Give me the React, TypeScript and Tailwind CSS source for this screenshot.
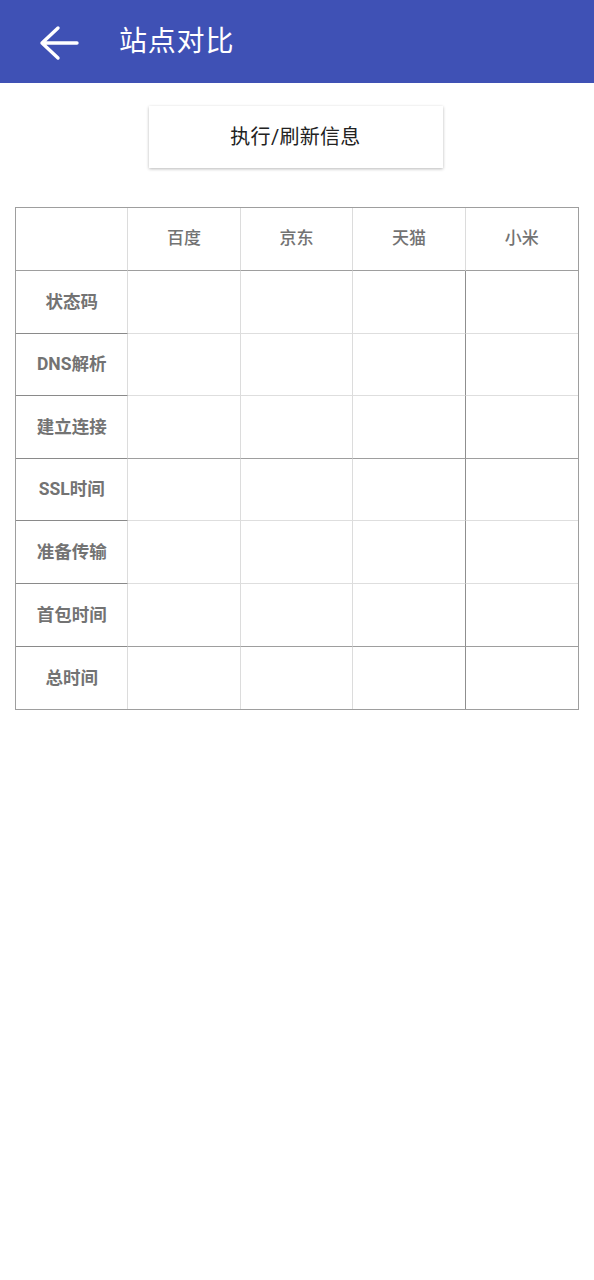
import React from "react";

const FONT = { fontFamily: "Roboto, 'Noto Sans CJK SC', 'Noto Sans', sans-serif" };

const cols = ["百度", "京东", "天猫", "小米"];
const rows = ["状态码", "DNS解析", "建立连接", "SSL时间", "准备传输", "首包时间", "总时间"];
// rows whose bottom line is dark across the whole table
const darkRowBottoms = new Set([2, 5, 6]);

export default function App() {
  return (
    <div className="w-[594px] h-[1280px] bg-white" style={FONT}>
      <div className="h-[83px] bg-[#3f51b5] flex items-center">
        <svg width="50" height="50" viewBox="0 0 50 50" className="ml-[34px]">
          <path d="M8 26 H43 M24 11 L8 26 L24 41" fill="none" stroke="#fff" strokeWidth="3.4" strokeLinecap="round" strokeLinejoin="round" />
        </svg>
        <div className="ml-[35px] text-white text-[28px] leading-none tracking-[0.8px]">站点对比</div>
      </div>

      <div className="flex justify-center mt-[23px] pr-[3px]">
        <div className="w-[294px] h-[62px] bg-white shadow-[0_1px_3px_rgba(0,0,0,0.28)] flex items-center justify-center text-[20px] text-[#222] tracking-[0.3px]">
          执行/刷新信息
        </div>
      </div>

      <div className="ml-[15px] mt-[39px] w-[564px] border border-[#9e9e9e] grid grid-cols-5">
        <div className="h-[63px] border-b border-[#9e9e9e] border-r border-r-[#dcdcdc]" />
        {cols.map((c, i) => (
          <div
            key={c}
            className={`h-[63px] border-b border-[#9e9e9e] flex items-center justify-center text-[17px] font-medium text-[#737373] ${i < 3 ? "border-r border-r-[#dcdcdc]" : ""}`}
          >
            {c}
          </div>
        ))}
        {rows.map((r, ri) => {
          const last = ri === rows.length - 1;
          const dark = darkRowBottoms.has(ri);
          return (
            <React.Fragment key={r}>
              <div
                className={`h-[62.6px] flex items-center justify-center text-[17.5px] font-bold text-[#737373] border-r border-r-[#dcdcdc] ${last ? "" : "border-b border-b-[#8a8a8a]"}`}
              >
                {r}
              </div>
              {cols.map((c, ci) => (
                <div
                  key={c}
                  className={`h-[62.6px] ${last ? "" : dark ? "border-b border-b-[#9e9e9e]" : "border-b border-b-[#dedede]"} ${ci === 2 ? "border-r border-r-[#8f8f8f]" : ci < 2 ? "border-r border-r-[#dcdcdc]" : ""}`}
                />
              ))}
            </React.Fragment>
          );
        })}
      </div>
    </div>
  );
}
